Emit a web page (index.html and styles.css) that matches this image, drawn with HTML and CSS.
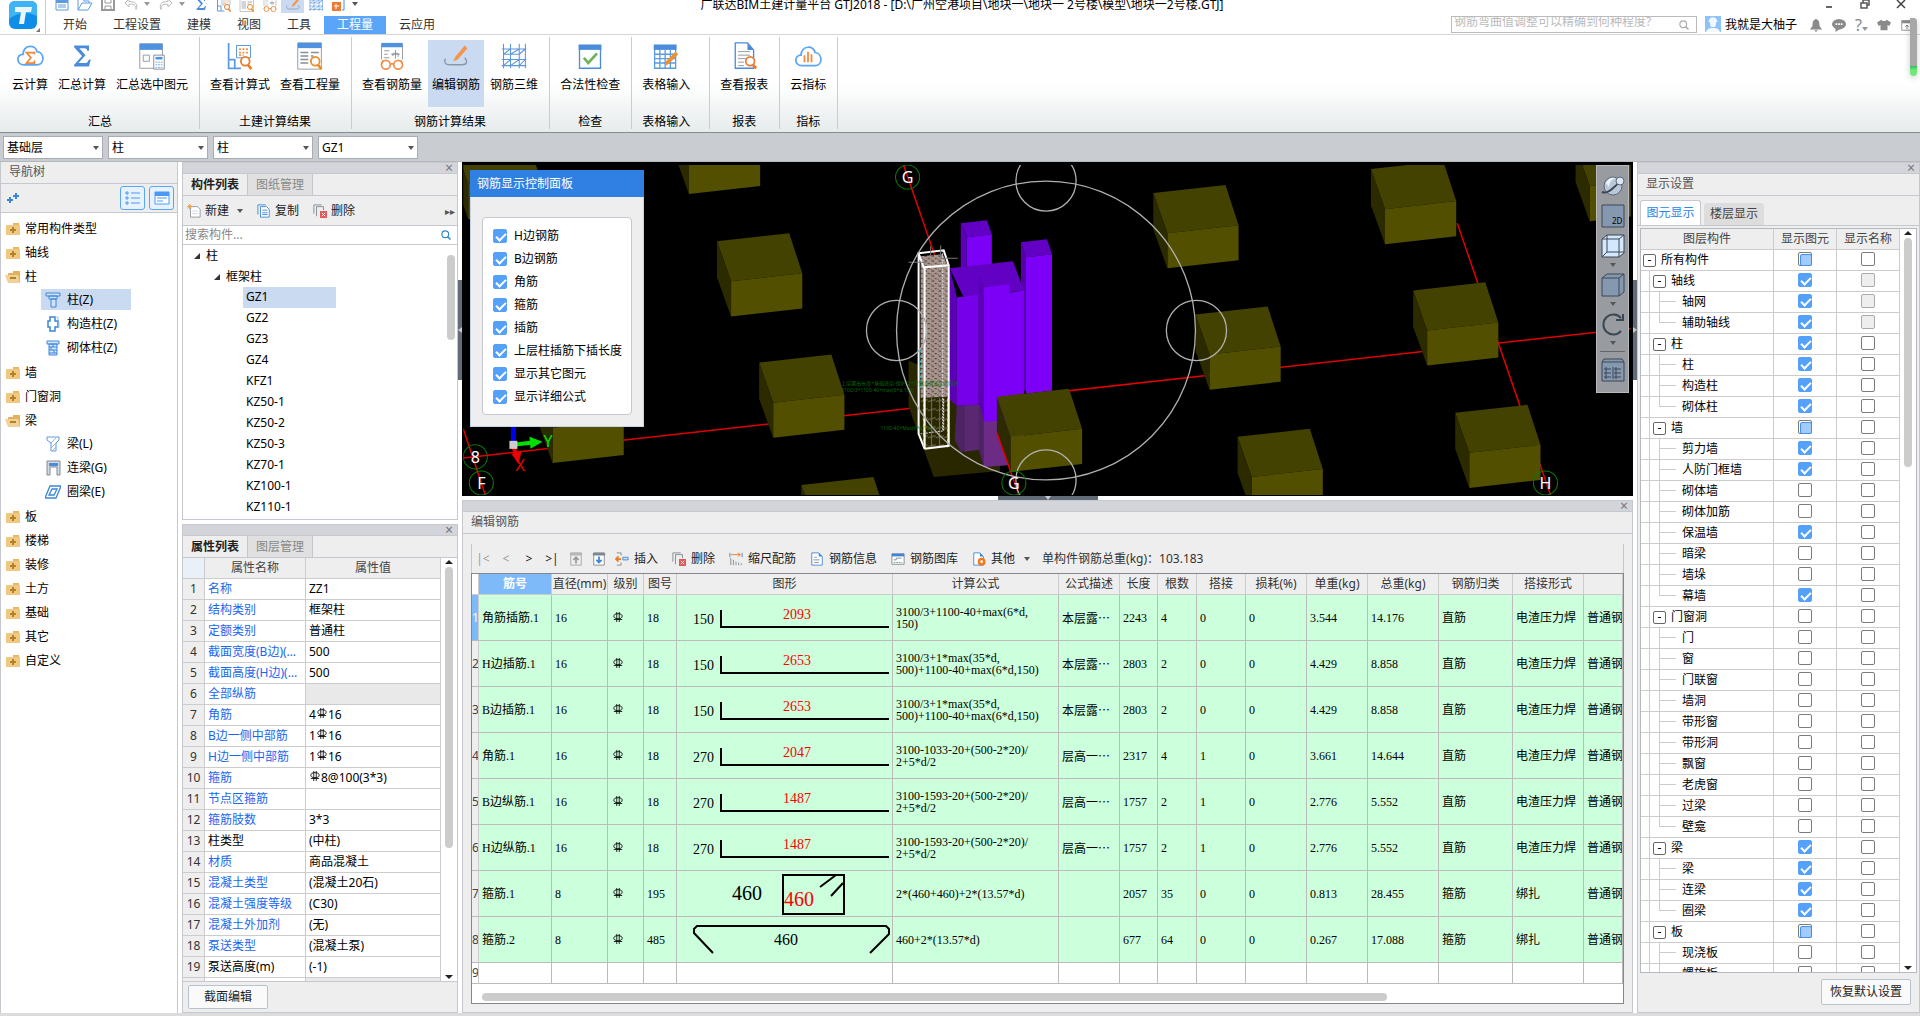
FILE: index.html
```
<!DOCTYPE html>
<html lang="zh-CN">
<head>
<meta charset="UTF-8">
<meta name="viewport" content="width=device-width, initial-scale=1.0">
<title>广联达BIM土建计量平台 GTJ2018</title>
<link rel="stylesheet" href="styles.css">
</head>
<body>
<!-- Icon sprite -->
<svg class="sprite" aria-hidden="true">
  <symbol id="i-doc" viewBox="0 0 16 16"><path d="M2 3h12v11H2z" fill="#fff" stroke="#5c9be0"/><path d="M2 3h12v4H2z" fill="#5c9be0"/><path d="M4 9h8M4 11h8" stroke="#5c9be0"/></symbol>
  <symbol id="i-open" viewBox="0 0 16 16"><path d="M1 14V3h5l1 2h5v2M1 14l4-7h10l-4 7z" fill="none" stroke="#5c9be0"/></symbol>
  <symbol id="i-save" viewBox="0 0 16 16"><path d="M2 2h12v12H2z" fill="none" stroke="#999" stroke-width="2"/><path d="M5 2v5h6V2M5 14v-4h6v4" fill="none" stroke="#999"/></symbol>
  <symbol id="i-undo" viewBox="0 0 16 16"><path d="M6 3 2 7l4 4V8.500c4-1 7 0 7 5 2-5 0-8-7-8z" fill="#fff" stroke="#bbb"/></symbol>
  <symbol id="i-redo" viewBox="0 0 16 16"><path d="M10 3l4 4-4 4V8.500c-4-1-7 0-7 5-2-5 0-8 7-8z" fill="#fff" stroke="#bbb"/></symbol>
  <symbol id="i-cloudsum" viewBox="0 0 32 32"><path d="M9 26c-9 0-9-12-1-12 1-12 15-11 16-3 9 1 9 15 0 15z" fill="#fff" stroke="#5aa5f5" stroke-width="2"/><path d="M21 14v-2h-9l5 6-5 6h9v-3" fill="none" stroke="#f0883c" stroke-width="2"/></symbol>
  <symbol id="i-sigma" viewBox="0 0 32 32"><path d="M7 4h17v6h-2c0-2-1-3-3-3h-6l7 8-8 9h8c2 0 3-2 4-4h2l-2 8H7v-2l9-10-9-10z" fill="#4a8cdb"/></symbol>
  <symbol id="i-calc" viewBox="0 0 32 32"><path d="M2 2h26v28H2z" fill="#fff" stroke="#8a9099"/><path d="M2 2h26v7H2z" fill="#4f93e0"/><path d="M6 15h7v7H6z" fill="none" stroke="#8a9099"/><path d="M18 15h12v16H18z" fill="#fff" stroke="#7a8088"/><path d="M20 17h8v3h-8z" fill="#4f93e0"/><path d="M20 23h8M20 26h8M20 29h8" stroke="#5c9be0" stroke-dasharray="2 1"/></symbol>
  <symbol id="i-expr" viewBox="0 0 32 32"><path d="M3 1v29h14M3 20h7v10" fill="none" stroke="#5c9be0" stroke-width="2"/><path d="M12 4h16v14H12z" fill="#fff" stroke="#4a8cdb"/><path d="M15 8h11M15 12h11M15 15h5" stroke="#f0883c" stroke-width="2" stroke-dasharray="2 2"/><circle cx="22" cy="22" r="5" fill="#fff" stroke="#ee7a22" stroke-width="2"/><path d="m25 26 4 5" stroke="#ee7a22" stroke-width="3"/></symbol>
  <symbol id="i-qty" viewBox="0 0 32 32"><path d="M2 1h27v30H2z" fill="#fff" stroke="#8a9099"/><path d="M2 1h27v6H2z" fill="#4f93e0"/><path d="M5 12h9M5 16h9M5 20h9M5 24h9M17 12h9M17 16h3" stroke="#888f98" stroke-width="1.500"/><circle cx="22" cy="22" r="5" fill="#fff" stroke="#ee8a22" stroke-width="2"/><path d="m25 26 4 5" stroke="#ee8a22" stroke-width="3"/></symbol>
  <symbol id="i-glasses" viewBox="0 0 32 32"><path d="M4 20V2h24v18" fill="#fff" stroke="#8a9099"/><path d="M4 1h24v5H4z" fill="#4f93e0"/><path d="M7 10h6M7 14h4M7 18h6" stroke="#888f98"/><path d="M15 14h10M20 9v10M17 16v-3h6v4" fill="none" stroke="#888f98"/><circle cx="9" cy="26" r="5" fill="#fff" stroke="#f0924c" stroke-width="2"/><circle cx="23" cy="26" r="5" fill="#fff" stroke="#f0924c" stroke-width="2"/><path d="M14 25h4M4 25l2-4M28 25l-2-4" stroke="#f0924c" stroke-width="2"/></symbol>
  <symbol id="i-editbar" viewBox="0 0 32 32"><path d="M4 19c-3 6 2 7 6 7h13c5 0 7-3 3-8" fill="none" stroke="#8a98a8" stroke-width="1.500"/><path d="M26 4l3 3-11 13-5 2 2-5z" fill="#f5944a"/></symbol>
  <symbol id="i-bar3d" viewBox="0 0 32 32"><path d="M4 2v28M12 2v28M22 2v28M29 2v28M2 8h28M2 20h28M2 27h28M4 14l8-6M12 14l10-6M22 14l7-6M4 14h18l7-6M4 27l8-7M12 27l10-7M22 27l7-7" fill="none" stroke="#5c96dc" stroke-width="1.200"/></symbol>
  <symbol id="i-check" viewBox="0 0 32 32"><path d="M4 4h24v26H4z" fill="#fff" stroke="#4a8cdb" stroke-width="1.500"/><path d="M3 3h26v6H3z" fill="#4a8cdb"/><path d="m9 18 5 6 10-11" fill="none" stroke="#6db255" stroke-width="3"/></symbol>
  <symbol id="i-sheet" viewBox="0 0 32 32"><path d="M3 4h24v26H3zM3 14h24M3 19h24M3 24h24M9 9v21M15 9v21M21 9v21" fill="#fff" stroke="#5c9be0" stroke-width="1.500"/><path d="M2 3h26v6H2z" fill="#4a8cdb"/><path d="M27 11l3 3-11 11-4 2 1-5z" fill="#f09028"/></symbol>
  <symbol id="i-report" viewBox="0 0 32 32"><path d="M6 1h14l7 8v21H6z" fill="#fff" stroke="#4a8cdb" stroke-width="1.500"/><path d="M20 1l7 8h-7z" fill="#4a8cdb"/><path d="M9 11h14M9 15h14M9 19h9M9 23h7M9 27h7" stroke="#888f98"/><circle cx="23" cy="22" r="5" fill="#fff" stroke="#ee7a32" stroke-width="2"/><path d="m26 26 4 4" stroke="#ee7a32" stroke-width="3"/></symbol>
  <symbol id="i-cloudbar" viewBox="0 0 32 32"><path d="M9 27c-9 0-9-12-1-12 1-12 15-11 16-3 9 1 9 15 0 15z" fill="#fff" stroke="#5aa5f5" stroke-width="2"/><path d="M12 23v-8M16 23V11M20 23v-9" stroke="#f0883c" stroke-width="2"/></symbol>
  <symbol id="i-mag" viewBox="0 0 16 16"><circle cx="7" cy="7" r="4.500" fill="none" stroke="currentColor" stroke-width="1.500"/><path d="m10 10 4 4" stroke="currentColor" stroke-width="2"/></symbol>
  <symbol id="i-bell" viewBox="0 0 16 16"><path d="M8 1c4 1 4 5 4 8l3 4H1l3-4c0-3 0-7 4-8zM6 14h4l-2 2z" fill="#8a8a8a"/></symbol>
  <symbol id="i-chat" viewBox="0 0 16 16"><ellipse cx="8" cy="7" rx="8" ry="6" fill="#8a8a8a"/><path d="M4 10v6l6-4z" fill="#8a8a8a"/><path d="M4 7h8" stroke="#fff" stroke-width="2" stroke-dasharray="2 1"/></symbol>
  <symbol id="i-shirt" viewBox="0 0 16 16"><path d="M5 2c1 2 5 2 6 0l5 3-2 4-2-1v6H4V8L2 9 0 5z" fill="#8a8a8a"/></symbol>
  <symbol id="i-up" viewBox="0 0 16 16"><path d="M2 3h13v11H2z" fill="none" stroke="#8a8a8a"/><path d="M2 3h13v3H2z" fill="#8a8a8a"/><path d="M8 13V8M6 10l2-2 2 2" fill="none" stroke="#777"/></symbol>
  <symbol id="i-folder" viewBox="0 0 16 14"><path d="M8 1h6v3H8z" fill="#e5b765"/><path d="M1 3h14v10H1z" fill="#efc981"/><path d="M8 5v6M5 8h6" stroke="#b5822c" stroke-width="2"/></symbol>
  <symbol id="i-folder-open" viewBox="0 0 16 14"><path d="M8 1h7v12H3V3h5z" fill="#e2b25c"/><path d="M0 5h13l2 8H3z" fill="#f2d197"/><path d="M5 8h6" stroke="#b5822c" stroke-width="2"/></symbol>
  <symbol id="i-col" viewBox="0 0 16 16"><path d="M1 1h14v3H1zM4 4h8v3H4zM6 7h5v8H6z" fill="#cfe3fa" stroke="#3c86d8"/></symbol>
  <symbol id="i-gzcol" viewBox="0 0 16 16"><path d="M5 1h5v4h3v6h-3v4H5v-4H3V5h2z" fill="#fff" stroke="#3c86d8" stroke-width="1.500"/><path d="M11 1h2v3M14 6v6" fill="none" stroke="#9cc3ee"/></symbol>
  <symbol id="i-brick" viewBox="0 0 16 16"><path d="M2 1h12v3H2zM4 4h8v11H4z" fill="#d6e8fb" stroke="#3c86d8"/><path d="M4 7h8M4 10h8M4 13h8M8 4v3M6 7v3M9 10v3" stroke="#3c86d8"/></symbol>
  <symbol id="i-beam" viewBox="0 0 16 16"><path d="M2 1h12v3l-3 3v8H6V7L2 4z" fill="#fff" stroke="#5c9be0"/><path d="m6 7 5-5M6 12l5-5M7 15l4-4" stroke="#9cb4cc"/></symbol>
  <symbol id="i-lbeam" viewBox="0 0 16 16"><path d="M2 1h13v14h-3V7H5v8H2z" fill="#d5dbe2" stroke="#7e8a96"/><path d="M4 3h9v3H4z" fill="#4a8cdb"/></symbol>
  <symbol id="i-ring" viewBox="0 0 16 16"><path d="M5 2h11l-5 12H0zM7 5h5l-3 6H4z" fill="#fff" stroke="#3c86d8" stroke-width="1.300"/></symbol>
  <symbol id="i-new" viewBox="0 0 16 16"><path d="M4 3h8l3 3v9H4z" fill="#fff" stroke="#8d949c"/><path d="M6 8h6M6 11h6" stroke="#c9ced4"/><path d="M0 3h6M3 0v6M1 1l4 4M5 1 1 5" stroke="#f0a03c"/></symbol>
  <symbol id="i-copy" viewBox="0 0 16 16"><path d="M1 12V1h9" fill="none" stroke="#3c86d8"/><path d="M4 3h7l3 3v9H4z" fill="#fff" stroke="#3c86d8"/><path d="M6 7h6M6 10h6M6 12h6" stroke="#3c86d8"/></symbol>
  <symbol id="i-del" viewBox="0 0 16 16"><path d="M1 11V1h9M4 14V3h8v4" fill="none" stroke="#7e8690"/><path d="M8 8h8v8H8z" fill="#e05858"/><path d="m10 10 4 4M14 10l-4 4" stroke="#fff"/></symbol>
  <symbol id="i-rowup" viewBox="0 0 16 16"><path d="M2 1h12v14H2z" fill="#eee" stroke="#a5a5a5"/><path d="M1 1h14v3H1z" fill="#b5b5b5"/><path d="M8 13V6M5 9l3-3 3 3" fill="none" stroke="#999" stroke-width="2"/></symbol>
  <symbol id="i-rowdown" viewBox="0 0 16 16"><path d="M2 1h12v14H2z" fill="#fff" stroke="#7e8690"/><path d="M1 1h14v3H1z" fill="#7e8690"/><path d="M8 5v7M5 9l3 3 3-3" fill="none" stroke="#3c86d8" stroke-width="2"/></symbol>
  <symbol id="i-ins" viewBox="0 0 16 16"><path d="M2 1h5v3M2 15h5v-3" fill="none" stroke="#7e8690"/><path d="M7 8H1M4 5 1 8l3 3" fill="none" stroke="#ee7a22" stroke-width="2"/><path d="M9 6h6v3H9z" fill="#cfe3fa" stroke="#3c86d8"/></symbol>
  <symbol id="i-scale" viewBox="0 0 16 16"><path d="M1 1v5M15 1v5" stroke="#3c86d8"/><path d="M2 3h11M10 1l3 2-3 2" fill="none" stroke="#ee7a22"/><path d="M2 15V7M5 15V9M8 15v-4M11 15v-3M14 15v-2" stroke="#7e8690"/></symbol>
  <symbol id="i-info" viewBox="0 0 16 16"><path d="M2 1h8l4 4v10H2z" fill="#fff" stroke="#3c86d8"/><path d="M10 1l4 4h-4z" fill="#3c86d8"/><path d="M5 6h3M4 9h7M5 12h5" stroke="#7e8690"/></symbol>
  <symbol id="i-lib" viewBox="0 0 16 16"><path d="M1 2h14v12H1z" fill="#fff" stroke="#7e8690"/><path d="M1 2h14v3H1z" fill="#3c86d8"/><path d="M3 9h3V7h6" fill="none" stroke="#7e8690"/><path d="M3 12h10" stroke="#5fa85a" stroke-dasharray="2 1"/></symbol>
  <symbol id="i-other" viewBox="0 0 16 16"><path d="M2 1h7l4 4v10H2z" fill="#fff" stroke="#3c86d8"/><path d="M9 1l4 4H9z" fill="#3c86d8"/><circle cx="11" cy="11" r="3" fill="#fff" stroke="#ee7a22" stroke-width="3"/></symbol>
  <symbol id="i-steel" viewBox="0 0 12 12"><ellipse cx="6" cy="5" rx="5" ry="3" fill="none" stroke="currentColor"/><path d="M1 9h10M4.500 0v12M7.500 0v12" fill="none" stroke="currentColor"/></symbol>
</svg>

<header class="header">
  <div class="logo">
    <svg width="28" height="28" viewBox="0 0 28 28"><rect width="28" height="28" rx="6" fill="#0f8ee8"/><path d="M0 6q0-6 6-6h16q6 0 6 6v9Q14 8 0 18z" fill="#3fb4f5"/><path d="M6 6h17l-1 5h-5l-2 12h-5l2-12H6z" fill="#eaf7ff"/></svg>
    <span class="corner"></span>
  </div>
  <div class="head-main">
    <div class="titlebar">
      <div class="quick">
        <button aria-label="新建"><svg><use href="#i-doc"/></svg></button>
        <button aria-label="打开"><svg><use href="#i-open"/></svg></button>
        <button aria-label="保存"><svg><use href="#i-save"/></svg></button>
        <button aria-label="撤销"><svg><use href="#i-undo"/></svg></button><i class="caret light"></i>
        <button aria-label="恢复"><svg><use href="#i-redo"/></svg></button><i class="caret light"></i>
        <button aria-label="汇总计算"><svg><use href="#i-sigma"/></svg></button>
        <button aria-label="查看计算式"><svg><use href="#i-expr"/></svg></button>
        <button aria-label="查看工程量"><svg><use href="#i-qty"/></svg></button>
        <button aria-label="查看钢筋量"><svg><use href="#i-glasses"/></svg></button>
        <button aria-label="编辑钢筋" class="on"><svg><use href="#i-editbar"/></svg></button>
        <button aria-label="钢筋三维"><svg><use href="#i-bar3d"/></svg></button>
        <button aria-label="添加"><svg viewBox="0 0 16 16"><path d="M1 6h9v9H1z" fill="#ee7a32"/><path d="M5 8v5M3 10h5" stroke="#fff"/><path d="M6 1v3M13 1v13H11" fill="none" stroke="#4a8cdb"/></svg></button>
        <i class="caret"></i>
      </div>
      <div class="title">广联达BIM土建计量平台 GTJ2018 - [D:\广州空港项目\地块一\地块一 2号楼\模型\地块一2号楼.GTJ]</div>
      <div class="win">
        <button aria-label="最小化"><svg viewBox="0 0 10 10"><path d="M2 8h6" stroke="#666" stroke-width="2"/></svg></button>
        <button aria-label="还原"><svg viewBox="0 0 10 10"><path d="M1 4h6v5H1zM3 4V1h6v5H7" fill="none" stroke="#555" stroke-width="1.500"/></svg></button>
        <button aria-label="关闭"><svg viewBox="0 0 10 10"><path d="m1 1 8 8M9 1 1 9" stroke="#444" stroke-width="1.500"/></svg></button>
      </div>
    </div>
    <div class="tabrow">
      <nav class="menu">
        <a href="#">开始</a><a href="#">工程设置</a><a href="#">建模</a><a href="#">视图</a><a href="#">工具</a><a href="#" class="active">工程量</a><a href="#">云应用</a>
      </nav>
      <div class="user">
        <div class="help-search"><input type="text" aria-label="搜索帮助" placeholder="钢筋弯曲值调整可以精确到何种程度?"><svg><use href="#i-mag"/></svg></div>
        <svg class="avatar" viewBox="0 0 16 16"><path d="M0 0h16v16H0z" fill="#8fc2fa"/><path d="M4 5c0-5 8-5 8 0l1 1H3zM5 6h6c0 5-1 5-3 5S5 11 5 6zM1 16c1-4 5-4 7-4s6 0 7 4z" fill="#f2f8ff"/></svg>
        <span class="uname">我就是大柚子</span>
        <div class="tools">
          <button aria-label="通知"><svg><use href="#i-bell"/></svg></button>
          <button aria-label="消息"><svg><use href="#i-chat"/></svg></button>
          <button aria-label="帮助" class="help">?<i class="caret light"></i></button>
          <button aria-label="皮肤"><svg><use href="#i-shirt"/></svg></button>
          <button aria-label="收起"><svg><use href="#i-up"/></svg></button>
        </div>
      </div>
    </div>
  </div>
  <div class="gauge"></div>
</header>

<div class="ribbon">
  <section class="group first">
    <div class="items">
      <button><svg><use href="#i-cloudsum"/></svg>云计算</button>
      <button><svg><use href="#i-sigma"/></svg>汇总计算</button>
      <button><svg><use href="#i-calc"/></svg>汇总选中图元</button>
    </div>
    <h2>汇总</h2>
  </section>
  <section class="group">
    <div class="items">
      <button><svg><use href="#i-expr"/></svg>查看计算式</button>
      <button><svg><use href="#i-qty"/></svg>查看工程量</button>
    </div>
    <h2>土建计算结果</h2>
  </section>
  <section class="group">
    <div class="items">
      <button><svg><use href="#i-glasses"/></svg>查看钢筋量</button>
      <button class="on"><svg><use href="#i-editbar"/></svg>编辑钢筋</button>
      <button><svg><use href="#i-bar3d"/></svg>钢筋三维</button>
    </div>
    <h2>钢筋计算结果</h2>
  </section>
  <section class="group">
    <div class="items"><button><svg><use href="#i-check"/></svg>合法性检查</button></div>
    <h2>检查</h2>
  </section>
  <section class="group wide">
    <div class="items"><button><svg><use href="#i-sheet"/></svg>表格输入</button></div>
    <h2>表格输入</h2>
  </section>
  <section class="group">
    <div class="items"><button><svg><use href="#i-report"/></svg>查看报表</button></div>
    <h2>报表</h2>
  </section>
  <section class="group">
    <div class="items"><button><svg><use href="#i-cloudbar"/></svg>云指标</button></div>
    <h2>指标</h2>
  </section>
</div>

<div class="filters">
  <label class="combo"><select aria-label="楼层"><option>基础层</option></select><i class="caret"></i></label>
  <label class="combo"><select aria-label="构件大类"><option>柱</option></select><i class="caret"></i></label>
  <label class="combo"><select aria-label="构件类型"><option>柱</option></select><i class="caret"></i></label>
  <label class="combo"><select aria-label="构件"><option>GZ1</option></select><i class="caret"></i></label>
</div>

<main class="main">
  <!-- Navigation tree -->
  <aside class="nav">
    <h3 class="bar">导航树</h3>
    <div class="nav-tools">
      <svg class="plus" viewBox="0 0 12 12"><path d="M0 8h6M3 5v6M6 4h6M9 1v6" stroke="#3c86d8" stroke-width="2"/></svg>
      <button aria-label="列表"><svg viewBox="0 0 16 16"><path d="M1 2h2v2H1zM1 7h2v2H1zM1 12h2v2H1zM6 3h9M6 8h9M6 13h9" fill="none" stroke="#4a9af5"/></svg></button>
      <button aria-label="卡片"><svg viewBox="0 0 16 16"><path d="M1 2h14v12H1z" fill="#fff" stroke="#4a9af5"/><path d="M1 2h14v4H1z" fill="#4a9af5"/><path d="M3 8h10M3 11h6" stroke="#4a9af5"/></svg></button>
    </div>
    <ul class="tree" id="nav-tree"></ul>
  </aside>

  <div class="middle">
    <section class="panel">
      <div class="strip"><button aria-label="关闭">×</button></div>
      <div class="tabs"><button class="active">构件列表</button><button>图纸管理</button></div>
      <div class="list-tools">
        <button><svg><use href="#i-new"/></svg>新建<i class="caret"></i></button>
        <button><svg><use href="#i-copy"/></svg>复制</button>
        <button><svg><use href="#i-del"/></svg>删除</button>
        <span class="more">▸▸</span>
      </div>
      <div class="find"><input type="text" aria-label="搜索构件" placeholder="搜索构件..."><svg><use href="#i-mag"/></svg></div>
      <div class="comp">
        <ul class="comp-tree" id="comp-tree"></ul>
        <div class="scroll comp-scroll"><span></span></div>
      </div>
    </section>
    <section class="panel props">
      <div class="strip"><button aria-label="关闭">×</button></div>
      <div class="tabs"><button class="active">属性列表</button><button>图层管理</button></div>
      <div class="prop-box">
        <div class="prop-wrap">
          <table class="prop-table">
            <colgroup><col class="c-no"><col class="c-name"><col></colgroup>
            <thead><tr><th></th><th>属性名称</th><th>属性值</th></tr></thead>
            <tbody id="props"></tbody>
          </table>
        </div>
        <div class="scroll arrows prop-scroll"><span></span></div>
      </div>
      <div class="foot"><button class="btn">截面编辑</button></div>
    </section>
  </div>

  <div class="center">
    <i class="knob left"></i><i class="knob right"></i>
    <div class="view">
      <svg class="scene" viewBox="462 162 1171 333" preserveAspectRatio="xMidYMid slice">
        <defs>
          <g id="cube"><path d="M0 0 72-8 85 32 14 40z" fill="#444200"/><path d="M14 40 85 32V67L14 75z" fill="#525000"/><path d="M0 0 14 40V75L0 36z" fill="#2c2b00"/></g>
          <clipPath id="clip"><path d="M465 165h1164v329H465z"/></clipPath>
          <pattern id="mesh" width="7" height="5" patternUnits="userSpaceOnUse"><path d="M0 0h7v5H0z" fill="#a8958e"/><path d="M1 1h2M4 3h2M0 4h1M3 0v1" stroke="#4a3d38"/></pattern>
          <pattern id="wire" width="8" height="9" patternUnits="userSpaceOnUse"><path d="M0 5l8-2M4 0v9" stroke="#77705a" fill="none"/></pattern>
        </defs>
        <g clip-path="url(#clip)">
          <path d="M465 457 1629 328M904 165 935 255M1456 223 1549 494M465 428l22 66" stroke="#e00000" stroke-width="1.500"/>
          <path d="M909 360V406L934 476 1000 470V400z" fill="#292700"/>
          <use href="#cube" x="456" y="144"/><use href="#cube" x="540" y="387"/>
          <use href="#cube" x="676" y="119"/><use href="#cube" x="718" y="241"/><use href="#cube" x="760" y="362"/><use href="#cube" x="802" y="484"/>
          <use href="#cube" x="1153" y="193"/><use href="#cube" x="1195" y="314"/><use href="#cube" x="1237" y="436"/>
          <use href="#cube" x="1370" y="169"/><use href="#cube" x="1412" y="290"/><use href="#cube" x="1454" y="412"/><use href="#cube" x="1574" y="146"/>
          <!-- purple columns -->
          <path d="M961 223l26-3 5 14-25 3z" fill="#6200c4"/><path d="M967 237l25-3v36h-25z" fill="#7c00f5"/><path d="M961 223l6 14v34h-6z" fill="#5c00b8"/>
          <path d="M1021 242l26-3 5 15-26 3z" fill="#6200c4"/><path d="M1026 257l26-3v136l-26 3z" fill="#7c00f5"/><path d="M1021 242l5 15v133h-5z" fill="#5600ac"/>
          <path d="M957 405l23-1 4-6 40-2v67l-40 3-5-17-18 2-6-12z" fill="#4c2464"/><path d="M984 419l40-4v48l-40 3z" fill="#6c2c86"/>
          <path d="M950 268l63-7 11 29-60 7z" fill="#6200c4"/><path d="M950 268l7 28v109l-7-6z" fill="#5c00b8"/><path d="M957 297l22-3v110l-22 1z" fill="#7600ea"/>
          <path d="M979 274l5 13v133l-5-20z" fill="#5c00b8"/><path d="M984 287l25-3 1 8 14-2v128l-40 3z" fill="#7c00f5"/>
          <path d="M965 405l14-1v45l-14 2z" fill="#5a2870"/>
          <use href="#cube" x="997" y="396"/>
          <path d="M997 432l22 62" stroke="#e00000" stroke-width="1.500"/>
          <!-- selected column -->
          <path d="M921 256l22-2 6 14v128l-28 1z" fill="url(#mesh)"/>
          <path d="M921 397h28v50h-24z" fill="url(#wire)"/>
          <path d="M919 253l25-3 5 15-25 2zV433l6 15V267M949 265v180l-24 3" fill="none" stroke="#fff" stroke-width="2"/>
          <path d="M944 398v32l-23 3M943 250v180" fill="none" stroke="#ddd" stroke-dasharray="2 1"/>
          <path d="M948 345v50M921 350v40" stroke="#30c8d8" stroke-dasharray="2 3"/>
          <path d="M948 398v46M924 398v48" stroke="#e8e020" stroke-dasharray="3 2"/>
          <path d="M909 262h18M940 258h18M931 246v10M941 245v12" stroke="#777"/>
          <g class="tiny"><text x="842" y="384">上层露出长度+基础底层-保护层+计算设置设定的弯折</text><text x="842" y="391">3100/3+1100-40+max(6*d,150)</text><text x="881" y="429">1100-40+Max(6*d,150)</text></g>
          <g fill="none" stroke="#b0b0b0" stroke-width="1.300"><circle cx="1046" cy="330" r="149"/><circle cx="1046" cy="181" r="30"/><circle cx="1046" cy="479" r="30"/><circle cx="897" cy="330" r="30"/><circle cx="1196" cy="330" r="30"/></g>
          <g fill="none" stroke="#0a7a0a"><circle cx="908" cy="177" r="12"/><circle cx="477" cy="456" r="12"/><circle cx="483" cy="482" r="12"/><circle cx="1014" cy="482" r="12"/><circle cx="1544" cy="482" r="12"/></g>
          <g class="axis"><text x="908" y="183">G</text><text x="477" y="462">8</text><text x="483" y="488">F</text><text x="1014" y="488">G</text><text x="1544" y="488">H</text></g>
          <path d="M515 426v16" stroke="#0000f0" stroke-width="5"/><path d="M515 444l17-2" stroke="#00e000" stroke-width="4"/><path d="M531 436l13 5-12 7z" fill="#00e000"/><path d="M515 446l3 8" stroke="#f00000" stroke-width="4"/><path d="M513 453l10-2-3 12z" fill="#f00000"/><path d="M511 440h8v8h-8z" fill="#ccc"/>
          <text class="ax" x="545" y="446" fill="#00e000">Y</text><text class="ax" x="517" y="470" fill="#f00000">X</text>
        </g>
      </svg>
      <div class="dialog">
        <h3>钢筋显示控制面板</h3>
        <div class="opts">
          <label><input type="checkbox" checked>H边钢筋</label>
          <label><input type="checkbox" checked>B边钢筋</label>
          <label><input type="checkbox" checked>角筋</label>
          <label><input type="checkbox" checked>箍筋</label>
          <label><input type="checkbox" checked>插筋</label>
          <label><input type="checkbox" checked>上层柱插筋下插长度</label>
          <label><input type="checkbox" checked>显示其它图元</label>
          <label><input type="checkbox" checked>显示详细公式</label>
        </div>
      </div>
      <div class="view-tools">
        <button aria-label="动态观察"><svg viewBox="0 0 24 24"><circle cx="12" cy="12" r="9" fill="#b9c9da" stroke="#5a6878"/><path d="M5 9q3-6 9-5-6 3-6 9z" fill="#eef4fa"/><path d="M1 18q4 2 10-3t9-9" fill="none" stroke="#3c4754" stroke-width="2"/><circle cx="19" cy="7" r="4" fill="#dbe6f1" stroke="#5a6878"/></svg></button>
        <button aria-label="二维"><svg viewBox="0 0 24 24"><path d="M1 1h22v22H1z" fill="#8498b0" stroke="#3c4754"/><text x="11" y="20">2D</text></svg></button>
        <button aria-label="线框"><svg viewBox="0 0 24 24"><path d="M1 5l5-4h17v18l-5 4H1z" fill="#d3e8fd" stroke="#3c4754"/><path d="M1 5h17v18M18 5l5-4M6 1v17h17M6 18l-5 5" fill="none" stroke="#3c4754"/></svg><i class="caret"></i></button>
        <button aria-label="实体"><svg viewBox="0 0 24 24"><path d="M1 5l5-4h17v18l-5 4H1z" fill="#8498b0" stroke="#3c4754"/><path d="M1 5h17v18M18 5l5-4" fill="none" stroke="#3c4754"/></svg><i class="caret"></i></button>
        <button aria-label="旋转"><svg viewBox="0 0 24 24"><path d="M20 6a10 10 0 1 0 0 13M22 2v6h-7" fill="none" stroke="#3c4754" stroke-width="2"/></svg><i class="caret"></i></button>
        <hr>
        <button aria-label="显示设置"><svg viewBox="0 0 24 24"><path d="M1 4l2-3h18l2 3v19H1z" fill="#8498b0" stroke="#3c4754"/><path d="M1 4h22M12 9v12M7 11h3M7 15h3M7 19h3M17 11h3M17 15h3M17 19h3" stroke="#3c4754"/><path d="M4 10h2v2H4zM4 14h2v2H4zM4 18h2v2H4zM14 10h2v2h-2zM14 14h2v2h-2zM14 18h2v2h-2z" fill="none" stroke="#3c4754"/></svg></button>
      </div>
    </div>
    <div class="split"><i></i></div>
    <section class="panel edit">
      <div class="strip"><button aria-label="关闭">×</button></div>
      <h3 class="bar">编辑钢筋</h3>
      <div class="edit-body">
        <div class="edit-tools">
          <div class="steps">
            <button class="off" aria-label="首行">|&lt;</button><button class="off" aria-label="上一行">&lt;</button><button aria-label="下一行">&gt;</button><button aria-label="末行">&gt;|</button>
          </div>
          <div class="moves">
            <button aria-label="上移"><svg><use href="#i-rowup"/></svg></button>
            <button aria-label="下移"><svg><use href="#i-rowdown"/></svg></button>
            <button><svg><use href="#i-ins"/></svg>插入</button>
          </div>
          <button><svg><use href="#i-del"/></svg>删除</button>
          <button><svg><use href="#i-scale"/></svg>缩尺配筋</button>
          <button><svg><use href="#i-info"/></svg>钢筋信息</button>
          <button><svg><use href="#i-lib"/></svg>钢筋图库</button>
          <button><svg><use href="#i-other"/></svg>其他<i class="caret"></i></button>
          <span class="total">单构件钢筋总重(kg)：103.183</span>
        </div>
        <div class="grid-box">
          <table class="bars">
            <colgroup><col class="w7"><col class="w73"><col class="w56"><col class="w36"><col class="w33"><col class="w216"><col class="w166"><col class="w61"><col class="w38"><col class="w39"><col class="w49"><col class="w61"><col class="w61"><col class="w71"><col class="w74"><col class="w71"><col></colgroup>
            <thead><tr><th></th><th class="cur">筋号</th><th>直径(mm)</th><th>级别</th><th>图号</th><th>图形</th><th>计算公式</th><th>公式描述</th><th>长度</th><th>根数</th><th>搭接</th><th>损耗(%)</th><th>单重(kg)</th><th>总重(kg)</th><th>钢筋归类</th><th>搭接形式</th><th></th></tr></thead>
            <tbody id="bars"></tbody>
          </table>
          <div class="hscroll"><span></span></div>
        </div>
      </div>
    </section>
  </div>

  <!-- Display settings -->
  <section class="panel display">
    <div class="strip"><button aria-label="关闭">×</button></div>
    <h3 class="bar">显示设置</h3>
    <div class="pills"><button class="active">图元显示</button><button>楼层显示</button></div>
    <div class="layer-box">
      <table class="layers">
        <colgroup><col><col class="w63"><col class="w63"></colgroup>
        <thead><tr><th>图层构件</th><th>显示图元</th><th>显示名称</th></tr></thead>
        <tbody id="layers"></tbody>
      </table>
      <div class="scroll arrows layer-scroll"><span></span></div>
    </div>
    <div class="foot right"><button class="btn">恢复默认设置</button></div>
  </section>
</main>
<script src="app.js"></script>
</body>
</html>
```
FILE: styles.css
```
* {
  box-sizing: border-box;
}
body {
  margin: 0;
  height: 100vh;
  display: flex;
  flex-direction: column;
  overflow: hidden;
  background: #fff;
  color: #000;
  font: 12px/20px "Noto Sans", "Noto Sans CJK SC", sans-serif;
}
button, input, select {
  font: inherit;
  color: inherit;
}
button {
  padding: 0;
  border: none;
  background: none;
}
h2, h3 {
  margin: 0;
  font-size: 12px;
  font-weight: normal;
}
ul {
  margin: 0;
  padding: 0;
  list-style: none;
}
a {
  color: inherit;
  text-decoration: none;
}
table {
  border-collapse: separate;
  border-spacing: 0;
  table-layout: fixed;
}
th {
  font-weight: normal;
}
.sprite {
  position: absolute;
  width: 0;
  height: 0;
}
.caret {
  display: inline-block;
  flex: none;
  border: 3px solid transparent;
  border-top: 4px solid #555;
  border-bottom: 0;
}
.caret.light {
  border-top-color: #999;
}

/* header */
.header {
  position: relative;
  display: flex;
  flex: none;
  height: 35px;
  border-bottom: 1px solid #d5d5d5;
}
.logo {
  position: relative;
  width: 46px;
  padding: 1px 9px;
  border-right: 1px solid #ccc;
}
.corner {
  position: absolute;
  right: 5px;
  bottom: 2px;
  border: 2px solid #777;
  border-top-color: transparent;
  border-left-color: transparent;
}
.head-main {
  flex: 1;
  padding: 0 6px 0 4px;
}
.titlebar {
  position: relative;
  display: flex;
  justify-content: space-between;
  align-items: center;
  height: 8px;
  margin-bottom: 8px;
}
.quick {
  display: flex;
  align-items: center;
  height: 8px;
}
.quick button {
  display: flex;
  justify-content: center;
  align-items: center;
  width: 23px;
  height: 18px;
}
.quick svg {
  width: 16px;
  height: 16px;
}
.quick .caret {
  margin: 0 4px 0 2px;
}
.quick .on {
  background: #c9daf1;
}
.title {
  position: absolute;
  left: 0;
  right: 0;
  top: 0;
  text-align: center;
  line-height: 10px;
  margin-right: 40px;
  pointer-events: none;
}
.win {
  display: flex;
  gap: 26px;
  padding-right: 8px;
}
.win svg {
  display: block;
  width: 10px;
  height: 10px;
}
.tabrow {
  display: flex;
  justify-content: space-between;
  height: 18px;
  line-height: 18px;
}
.menu a {
  display: inline-block;
  height: 18px;
  padding: 0 13px;
  color: #333;
}
.menu .active {
  background: #5aa5f7;
  color: #fff;
}
.user {
  display: flex;
}
.help-search {
  display: flex;
  width: 246px;
  height: 17px;
  margin-right: 8px;
  padding: 0 6px 0 2px;
  border: 1px solid #bbb;
  align-items: center;
}
.help-search input {
  flex: 1;
  min-width: 0;
  height: 15px;
  padding: 0 0 6px;
  border: none;
  outline: none;
}
input::placeholder {
  color: #bbb;
  opacity: 1;
}
.help-search svg {
  width: 12px;
  height: 12px;
  color: #aaa;
}
.avatar {
  width: 16px;
  height: 16px;
}
.uname {
  padding: 0 12px 0 4px;
}
.tools {
  display: flex;
  gap: 9px;
}
.tools svg {
  display: block;
  width: 14px;
  height: 14px;
}
.help {
  font-size: 16px;
  line-height: 16px;
  color: #888;
}
.gauge {
  position: absolute;
  right: 3px;
  top: 18px;
  width: 7px;
  height: 58px;
  border-radius: 0 4px 4px 4px;
  background: linear-gradient(#a8a8a8 48px, #28c060 48px, #70e878 52px);
  box-shadow: 0 2px 6px rgba(0,0,0,0.2);
}

/* ribbon */
.ribbon {
  display: flex;
  flex: none;
  height: 98px;
  padding: 2px 0 3px;
  border-bottom: 1px solid #858b91;
  background: linear-gradient(#fff 50%, #e6ebec);
}
.group {
  display: flex;
  flex-direction: column;
  padding: 3px 7px 0 6px;
  border-right: 1px solid #ccc;
}
.group.first {
  padding-left: 8px;
}
.group.wide {
  padding-right: 15px;
}
.items {
  display: flex;
  gap: 2px;
}
.items button {
  display: flex;
  flex-direction: column;
  align-items: center;
  height: 67px;
  padding: 2px 4px 0;
}
.items .on {
  background: #c9daf1;
}
.items svg {
  width: 28px;
  height: 28px;
  margin-bottom: 5px;
}
.group h2 {
  margin-top: 5px;
  text-align: center;
}

/* filters */
.filters {
  display: flex;
  flex: none;
  gap: 5px;
  height: 29px;
  padding: 3px;
  border-bottom: 1px solid #b4b8bd;
  background: #c9ccd1;
}
.combo {
  display: flex;
  align-items: center;
  width: 100px;
  height: 23px;
  padding-right: 3px;
  border: 1px solid #a9adb3;
  background: #fff;
}
.combo select {
  flex: 1;
  height: 21px;
  padding: 0 3px;
  border: none;
  background: none;
  appearance: none;
}

/* main layout */
.main {
  display: grid;
  grid-template-columns: 178px 276px minmax(0, 1fr) 283px;
  gap: 4px;
  flex: 1;
  min-height: 0;
  border-bottom: 3px solid #dcdcdc;
}
.main > * {
  min-height: 0;
}
.bar {
  height: 22px;
  padding-left: 8px;
  border-bottom: 1px solid #c5c8ce;
  background: #eee;
  color: #555;
}
.nav {
  overflow: hidden;
  border: 1px solid #c5c8ce;
  border-width: 0 1px;
}
.nav-tools {
  display: flex;
  gap: 4px;
  align-items: center;
  height: 29px;
  padding: 0 3px 0 6px;
  border-bottom: 1px solid #c5c8ce;
  background: #eee;
}
.nav-tools .plus {
  width: 12px;
  height: 12px;
  margin-right: auto;
}
.nav-tools button {
  display: flex;
  align-items: center;
  justify-content: center;
  width: 25px;
  height: 24px;
  border: 1px solid #5aa5f7;
  border-radius: 3px;
  background: #e8f2fd;
}
.nav-tools button svg {
  width: 16px;
  height: 16px;
}
.tree {
  padding-top: 4px;
}
.tree li {
  display: flex;
  align-items: center;
  gap: 4px;
  height: 24px;
  padding-left: 4px;
}
.tree li svg {
  width: 16px;
  height: 14px;
}
.tree .sub {
  width: 90px;
  height: 21px;
  margin: 0 0 3px 40px;
  gap: 6px;
}
.tree .sub svg {
  height: 16px;
}
.tree .sel, .comp-tree .sel {
  background: #c9daf1;
}

/* panels */
.middle {
  display: grid;
  grid-template-rows: 358fr 489fr;
  gap: 4px;
}
.panel {
  display: flex;
  flex-direction: column;
  min-height: 0;
  border: 1px solid #c5c8ce;
  background: #eee;
}
.strip {
  flex: none;
  height: 11px;
  border-bottom: 1px solid #c5c8ce;
  background: #d4d5da;
  text-align: right;
  padding-right: 4px;
}
.strip button {
  display: block;
  margin-left: auto;
  font-size: 14px;
  line-height: 10px;
  color: #777;
}
.tabs {
  display: flex;
  flex: none;
  height: 22px;
  border-bottom: 1px solid #c5c8ce;
}
.tabs button {
  width: 65px;
  border-right: 1px solid #c5c8ce;
  background: #e0e0e0;
  color: #888;
}
.tabs .active {
  background: #eee;
  color: #222;
  font-weight: bold;
}
.list-tools {
  display: flex;
  flex: none;
  gap: 14px;
  align-items: center;
  height: 30px;
  padding: 0 2px 0 4px;
  border-bottom: 1px solid #c5c8ce;
}
.list-tools button, .edit-tools button {
  display: flex;
  align-items: center;
  gap: 4px;
  color: #222;
}
.list-tools svg, .edit-tools svg {
  width: 14px;
  height: 16px;
}
.list-tools .caret, .edit-tools .caret {
  margin-left: 4px;
}
.more {
  margin-left: auto;
  font-size: 10px;
  color: #555;
}
.find {
  display: flex;
  flex: none;
  align-items: center;
  height: 19px;
  padding: 0 5px 0 2px;
  border-bottom: 1px solid #c5c8ce;
  background: #fff;
}
.find input {
  flex: 1;
  height: 18px;
  padding: 0;
  border: none;
  outline: none;
}
.find input::placeholder {
  color: #888;
}
.find svg {
  width: 12px;
  height: 12px;
  color: #2a86d0;
}
.comp {
  display: flex;
  flex: 1;
  min-height: 0;
  background: #fff;
}
.comp-tree {
  flex: 1;
  overflow: hidden;
}
.comp-tree li {
  width: 93px;
  height: 21px;
  margin-left: 60px;
  padding-left: 3px;
}
.comp-tree .l0, .comp-tree .l1 {
  display: flex;
  align-items: center;
  gap: 6px;
  margin-left: 8px;
}
.comp-tree .l1 {
  margin-left: 28px;
}
.comp-tree .l0::before, .comp-tree .l1::before {
  content: "";
  border: 3px solid #333;
  border-top-color: transparent;
  border-left-color: transparent;
}
.scroll {
  display: flex;
  flex: none;
  flex-direction: column;
  width: 10px;
}
.scroll span {
  width: 8px;
  border-radius: 4px;
  background: #ccc;
}
.comp-scroll span {
  height: 31%;
  margin-top: 10px;
}
.arrows {
  align-items: center;
  width: 16px;
  padding: 2px 0;
  background: #fff;
}
.arrows::before, .arrows::after {
  content: "";
  border: 4px solid transparent;
  border-bottom-color: #222;
  border-top: 0;
}
.arrows::after {
  margin-top: auto;
  border-top: 4px solid #222;
  border-bottom: 0;
}
.arrows span {
  margin-top: 3px;
}
.prop-scroll span {
  height: 67%;
}
.layer-scroll span {
  height: 31%;
}
.prop-box, .layer-box {
  display: flex;
  align-items: stretch;
  flex: 1;
  min-height: 0;
  overflow: hidden;
  border-bottom: 1px solid #c5c8ce;
  background: #fff;
}
.prop-wrap {
  flex: 1;
  min-width: 0;
}
.prop-table {
  width: 100%;
}
.c-no {
  width: 22px;
}
.c-name {
  width: 101px;
}
.prop-table th, .prop-table td, .layers th, .layers td {
  height: 21px;
  padding: 0 3px;
  border-right: 1px solid #ccc;
  border-bottom: 1px solid #ccc;
  white-space: nowrap;
  overflow: hidden;
  text-overflow: ellipsis;
}
.prop-table th, .layers th {
  background: #eee;
  color: #444;
}
.prop-table th:first-child {
  background: #eaf0f7;
}
.prop-table td:first-child {
  padding: 0;
  background: #eee;
  text-align: center;
  color: #333;
}
.prop-table .blue {
  color: #1a66f0;
}
.prop-table .gray {
  background: #e9e9e9;
}
.steel {
  width: 10px;
  height: 10px;
}
.prop-table .steel {
  margin: 0 1px;
  vertical-align: 1px;
}
.foot {
  flex: none;
  padding: 3px 5px;
}
.btn {
  height: 24px;
  padding: 0 15px;
  border: 1px solid #b9c2d0;
  border-radius: 2px;
  background: #fafafa;
  color: #222;
}
.props .foot {
  height: 30px;
}

/* 3D view */
.center {
  position: relative;
  display: flex;
  flex-direction: column;
}
.knob {
  position: absolute;
  top: 118px;
  width: 4px;
  height: 100px;
  background: #626b78;
}
.knob::after {
  content: "";
  position: absolute;
  top: 47px;
  border: 3px solid transparent;
}
.knob.left {
  left: -4px;
}
.knob.left::after {
  right: 0;
  border-right: 4px solid #c5cad2;
  border-left: 0;
}
.knob.right {
  right: -4px;
}
.knob.right::after {
  left: 0;
  border-left: 4px solid #c5cad2;
  border-right: 0;
}
.view {
  position: relative;
  flex: 1;
  min-height: 0;
  overflow: hidden;
  background: #000;
}
.scene {
  display: block;
  width: 100%;
  height: 100%;
}
.axis {
  fill: #fff;
  font-size: 16px;
  text-anchor: middle;
}
.ax {
  font-size: 16px;
}
.tiny {
  fill: #0a6a0a;
  font-size: 5px;
}
.dialog {
  position: absolute;
  left: 8px;
  top: 8px;
  width: 174px;
  padding-bottom: 11px;
  border: 1px solid #c5d3e6;
  border-top: none;
  background: #eee;
}
.dialog h3 {
  padding: 4px 7px 3px;
  margin: 0 -1px;
  background: #2f80e2;
  color: #fff;
}
.opts {
  margin: 20px 11px 0;
  padding: 6px 10px;
  border: 1px solid #c5c8ce;
  border-radius: 4px;
  background: #fff;
}
.opts label {
  display: flex;
  align-items: center;
  gap: 7px;
  height: 23px;
  white-space: nowrap;
}
input[type="checkbox"] {
  appearance: none;
  display: block;
  flex: none;
  position: relative;
  width: 14px;
  height: 14px;
  margin: 0;
  border: 1px solid #7c7c7c;
  border-radius: 2px;
  background: #fff;
}
input[type="checkbox"]:checked {
  border-color: #54a0fa;
  background: #54a0fa;
}
input[type="checkbox"]:checked::after {
  content: "";
  position: absolute;
  left: 4px;
  top: 1px;
  width: 4px;
  height: 8px;
  border: 2px solid #fff;
  border-width: 0 2px 2px 0;
  transform: rotate(45deg);
}
input[type="checkbox"]:indeterminate::after {
  content: "";
  position: absolute;
  left: 1px;
  top: 1px;
  width: 10px;
  height: 10px;
  border: 1px solid #3c92f5;
  border-radius: 2px;
  background: #a2cbfb;
}
input[type="checkbox"]:disabled {
  border-color: #aaa;
  background: #eee;
}
.view-tools {
  position: absolute;
  right: 4px;
  top: 3px;
  display: flex;
  flex-direction: column;
  align-items: center;
  width: 33px;
  padding: 8px 3px 10px;
  gap: 6px;
  border: 1px solid #b8babd;
  background: #989ba0;
}
.view-tools button {
  display: flex;
  flex-direction: column;
  align-items: center;
  gap: 5px;
}
.view-tools svg {
  display: block;
  width: 24px;
  height: 24px;
}
.view-tools text {
  font-size: 8px;
}
.view-tools hr {
  width: 100%;
  margin: 0;
  border: none;
  border-top: 1px solid #666;
}
.split {
  flex: none;
  height: 4px;
}
.split i {
  display: block;
  width: 100px;
  height: 4px;
  margin: 0 auto;
  background: #626b78;
}
.split i::after {
  content: "";
  display: block;
  width: 0;
  margin: 0 auto;
  border: 3px solid transparent;
  border-top: 4px solid #c5cad2;
  border-bottom: 0;
}

/* bar editor */
.edit {
  flex: none;
}
.edit-body {
  padding: 10px 8px 8px;
}
.edit-tools {
  display: flex;
  align-items: center;
  gap: 14px;
  height: 29px;
  padding-left: 4px;
  border: 1px solid #c5c8ce;
  border-width: 0 1px;
}
.edit-tools button {
  gap: 5px;
}
.steps, .moves {
  display: flex;
  align-items: center;
  gap: 9px;
}
.edit-tools .steps {
  gap: 9px;
  margin-right: -4px;
}
.edit-tools .steps button {
  justify-content: center;
  width: 14px;
  white-space: nowrap;
}
.edit-tools .off {
  color: #999;
}
.edit-tools .total {
  margin-left: -2px;
  color: #333;
}
.grid-box {
  overflow: hidden;
  border: 1px solid #858790;
  background: #fff;
}
.bars {
  width: 100%;
}
.w7 { width: 7px; }
.w33 { width: 33px; }
.w36 { width: 36px; }
.w38 { width: 38px; }
.w39 { width: 39px; }
.w49 { width: 49px; }
.w56 { width: 56px; }
.w61 { width: 61px; }
.w63 { width: 63px; }
.w71 { width: 71px; }
.w73 { width: 73px; }
.w74 { width: 74px; }
.w166 { width: 166px; }
.w216 { width: 216px; }
.bars th {
  height: 21px;
  padding: 0;
  border-right: 1px solid #ccc;
  border-bottom: 1px solid #ccc;
  background: #eee;
  color: #333;
  white-space: nowrap;
}
.bars th:first-child {
  background: #fff;
}
.bars .cur {
  background: #7ebafa;
  color: #fff;
  font-weight: bold;
}
.bars td {
  height: 46px;
  padding: 0 0 0 3px;
  border-right: 1px solid #bbb;
  border-bottom: 1px solid #bbb;
  background: #ccffdb;
  font: 12px/12px "Liberation Serif", "Noto Sans CJK SC", serif;
  white-space: nowrap;
  overflow: hidden;
}
.bars td:first-child {
  padding: 0;
  border-right-color: #ccc;
  background: #eee;
  font-family: "Noto Sans", sans-serif;
  color: #444;
}
.bars td:nth-child(8) {
  font-family: "Noto Sans CJK SC", sans-serif;
}
.bars tr:first-child td:first-child {
  background: #7ebafa;
  color: #fff;
}
.bars .blank td {
  height: 21px;
  background: #fff;
}
.bars .shape {
  padding: 0;
}
.bars .steel {
  margin-left: 2px;
}
.shape svg {
  display: block;
  width: 215px;
  height: 45px;
  font-size: 14px;
}
.shape .big {
  font-size: 20px;
}
.shape .mid {
  font-size: 16px;
}
.hscroll {
  height: 19px;
  padding: 9px 10px 2px;
}
.hscroll span {
  display: block;
  width: 80%;
  height: 8px;
  border-radius: 4px;
  background: #ccc;
}

/* display settings */
.pills {
  display: flex;
  flex: none;
  align-items: flex-end;
  gap: 3px;
  height: 30px;
  padding: 0 2px;
  border-bottom: 1px solid #c5c8ce;
}
.pills button {
  width: 60px;
  height: 22px;
  border-radius: 3px 3px 0 0;
  background: #ddd;
  color: #444;
}
.pills .active {
  width: 61px;
  height: 25px;
  border: 1px solid #c5c8ce;
  border-bottom: none;
  background: #fff;
  color: #2a86e8;
}
.layer-box {
  margin: 2px 2px 0;
  border: 1px solid #b5b8be;
}
.layers {
  flex: 1;
  height: 0;
}
.layers td input {
  margin: 0 auto 3px;
}
.layers .name {
  padding: 0 0 0 41px;
}
.layers .name div {
  display: flex;
  align-items: center;
  gap: 5px;
}
.layers .l0 {
  padding-left: 2px;
}
.layers .l1 {
  padding-left: 12px;
  background: linear-gradient(#ccc, #ccc) 8px 0 / 1px 100% no-repeat;
}
.layers .l2 {
  background:
    linear-gradient(#ccc, #ccc) 8px 0 / 1px 100% no-repeat,
    linear-gradient(#ccc, #ccc) 18px 0 / 1px 100% no-repeat,
    linear-gradient(#ccc, #ccc) 18px 9px / 17px 1px no-repeat;
}
.layers .last {
  background:
    linear-gradient(#ccc, #ccc) 8px 0 / 1px 100% no-repeat,
    linear-gradient(#ccc, #ccc) 18px 0 / 1px 9px no-repeat,
    linear-gradient(#ccc, #ccc) 18px 9px / 17px 1px no-repeat;
}
.expander {
  width: 13px;
  height: 13px;
  border: 1px solid #666;
  border-radius: 2px;
  background: #fff;
  line-height: 10px;
}
.foot.right {
  height: 39px;
  padding: 6px 8px;
  text-align: right;
}
.right .btn {
  height: 26px;
  padding: 0 8px;
}
```
FILE: app.js
```
const steel = '<svg class="steel"><use href="#i-steel"/></svg>';

// [label, icon] - child rows carry their own icon
const nav = [
  ["常用构件类型"], ["轴线"], ["柱", "folder-open"],
  ["柱(Z)", "col"], ["构造柱(Z)", "gzcol"], ["砌体柱(Z)", "brick"],
  ["墙"], ["门窗洞"], ["梁", "folder-open"],
  ["梁(L)", "beam"], ["连梁(G)", "lbeam"], ["圈梁(E)", "ring"],
  ["板"], ["楼梯"], ["装修"], ["土方"], ["基础"], ["其它"], ["自定义"]
];
document.getElementById("nav-tree").innerHTML = nav.map(([text, icon = "folder"], i) => {
  const cls = icon.startsWith("folder") ? "" : i === 3 ? "sub sel" : "sub";
  return `<li class="${cls}"><svg><use href="#i-${icon}"/></svg>${text}</li>`;
}).join("");

const comps = ["柱", "框架柱", "GZ1", "GZ2", "GZ3", "GZ4", "KFZ1", "KZ50-1", "KZ50-2", "KZ50-3", "KZ70-1", "KZ100-1", "KZ110-1"];
document.getElementById("comp-tree").innerHTML = comps.map((c, i) => {
  const cls = ["l0", "l1", "sel"][i] || "";
  return `<li class="${cls}">${c}</li>`;
}).join("");

const props = [
  ["名称", "ZZ1"], ["结构类别", "框架柱"], ["定额类别", "普通柱"],
  ["截面宽度(B边)(mm)", "500"], ["截面高度(H边)(mm)", "500"], ["全部纵筋", ""],
  ["角筋", `4${steel}16`], ["B边一侧中部筋", `1${steel}16`], ["H边一侧中部筋", `1${steel}16`],
  ["箍筋", `${steel}8@100(3*3)`], ["节点区箍筋", ""], ["箍筋肢数", "3*3"],
  ["柱类型", "(中柱)"], ["材质", "商品混凝土"], ["混凝土类型", "(混凝土20石)"],
  ["混凝土强度等级", "(C30)"], ["混凝土外加剂", "(无)"], ["泵送类型", "(混凝土泵)"], ["泵送高度(m)", "(-1)"], ["", ""]
];
const plain = [13, 19];
document.getElementById("props").innerHTML = props.map(([name, value], i) => {
  const n = i + 1;
  return `<tr><td>${n < 20 ? n : ""}</td><td class="${plain.includes(n) ? "" : "blue"}">${name}</td><td class="${n === 6 || n === 20 ? "gray" : ""}">${value}</td></tr>`;
}).join("");

function lShape(side, len) {
  return `<svg viewBox="0 0 215 45"><text x="16" y="29">${side}</text><path d="M44 15v17h168" fill="none" stroke="#000" stroke-width="2"/><text x="120" y="24" text-anchor="middle" fill="#f00">${len}</text></svg>`;
}
const stirrup = '<svg viewBox="0 0 215 45"><text class="big" x="55" y="29">460</text><path d="M106 4h61v39h-61zM143 16l16-12M154 25l12-13" fill="none" stroke="#000" stroke-width="2"/><text class="big" x="107" y="35" fill="#f00">460</text></svg>';
const tie = '<svg viewBox="0 0 215 45"><path d="M36 36 17 16v-4l3-3h189l3 3v5l-19 19" fill="none" stroke="#000" stroke-width="2"/><text class="mid" x="109" y="28" text-anchor="middle">460</text></svg>';

const bars = [
  ["角筋插筋.1", 16, 18, lShape(150, 2093), "3100/3+1100-40+max(6*d,<br>150)", "本层露…", 2243, 4, 0, 0, "3.544", "14.176", "直筋", "电渣压力焊"],
  ["H边插筋.1", 16, 18, lShape(150, 2653), "3100/3+1*max(35*d,<br>500)+1100-40+max(6*d,150)", "本层露…", 2803, 2, 0, 0, "4.429", "8.858", "直筋", "电渣压力焊"],
  ["B边插筋.1", 16, 18, lShape(150, 2653), "3100/3+1*max(35*d,<br>500)+1100-40+max(6*d,150)", "本层露…", 2803, 2, 0, 0, "4.429", "8.858", "直筋", "电渣压力焊"],
  ["角筋.1", 16, 18, lShape(270, 2047), "3100-1033-20+(500-2*20)/<br>2+5*d/2", "层高一…", 2317, 4, 1, 0, "3.661", "14.644", "直筋", "电渣压力焊"],
  ["B边纵筋.1", 16, 18, lShape(270, 1487), "3100-1593-20+(500-2*20)/<br>2+5*d/2", "层高一…", 1757, 2, 1, 0, "2.776", "5.552", "直筋", "电渣压力焊"],
  ["H边纵筋.1", 16, 18, lShape(270, 1487), "3100-1593-20+(500-2*20)/<br>2+5*d/2", "层高一…", 1757, 2, 1, 0, "2.776", "5.552", "直筋", "电渣压力焊"],
  ["箍筋.1", 8, 195, stirrup, "2*(460+460)+2*(13.57*d)", "", 2057, 35, 0, 0, "0.813", "28.455", "箍筋", "绑扎"],
  ["箍筋.2", 8, 485, tie, "460+2*(13.57*d)", "", 677, 64, 0, 0, "0.267", "17.088", "箍筋", "绑扎"]
];
document.getElementById("bars").innerHTML = bars.map((b, i) => {
  const [name, dia, fig, shape, ...rest] = b;
  return `<tr><td>${i + 1}</td><td>${name}</td><td>${dia}</td><td>${steel}</td><td>${fig}</td><td class="shape">${shape}</td>` +
    rest.map(v => `<td>${v}</td>`).join("") + "<td>普通钢筋</td></tr>";
}).join("") + `<tr class="blank"><td>9</td>${"<td></td>".repeat(16)}</tr>`;

// [level, name, show element (1 on, 0 off, 2 partial), name box disabled]
const layers = [
  [0, "所有构件", 2], [1, "轴线", 1, 1], [2, "轴网", 1, 1], [2, "辅助轴线", 1, 1],
  [1, "柱", 1], [2, "柱", 1], [2, "构造柱", 1], [2, "砌体柱", 1],
  [1, "墙", 2], [2, "剪力墙", 1], [2, "人防门框墙", 1], [2, "砌体墙", 0], [2, "砌体加筋", 0],
  [2, "保温墙", 1], [2, "暗梁", 0], [2, "墙垛", 0], [2, "幕墙", 1],
  [1, "门窗洞", 0], [2, "门", 0], [2, "窗", 0], [2, "门联窗", 0], [2, "墙洞", 0], [2, "带形窗", 0],
  [2, "带形洞", 0], [2, "飘窗", 0], [2, "老虎窗", 0], [2, "过梁", 0], [2, "壁龛", 0],
  [1, "梁", 1], [2, "梁", 1], [2, "连梁", 1], [2, "圈梁", 1],
  [1, "板", 2], [2, "现浇板", 0], [2, "螺旋板", 0]
];
const layerBody = document.getElementById("layers");
layerBody.innerHTML = layers.map(([lvl, name, show, off], i) => {
  const next = layers[i + 1];
  const last = lvl === 2 && next && next[0] < 2 ? " last" : "";
  const exp = lvl < 2 ? `<button class="expander" aria-label="折叠${name}">-</button>` : "";
  return `<tr><td class="name l${lvl}${last}"><div>${exp}${name}</div></td>` +
    `<td><input type="checkbox" aria-label="显示图元 ${name}" data-state="${show}"${show === 1 ? " checked" : ""}></td>` +
    `<td><input type="checkbox" aria-label="显示名称 ${name}"${off ? " disabled" : ""}></td></tr>`;
}).join("");
layerBody.querySelectorAll('[data-state="2"]').forEach(box => { box.indeterminate = true; });
```
